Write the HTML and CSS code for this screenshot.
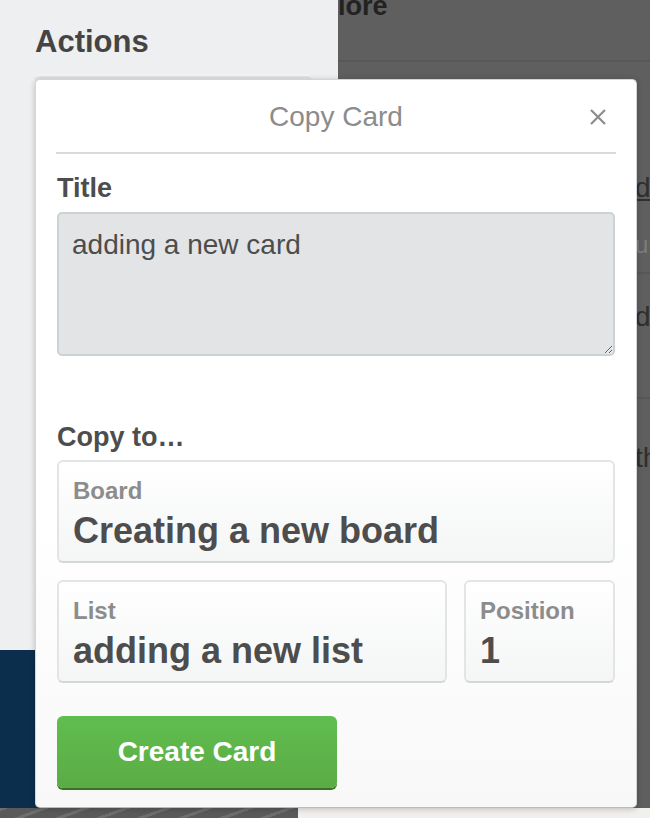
FILE: index.html
```html
<!DOCTYPE html>
<html lang="en">
<head>
<meta charset="utf-8">
<title>Copy Card</title>
<link rel="stylesheet" href="styles.css">
</head>
<body>
<div class="page">
  <div class="stage">
    <aside class="sidebar">
      <div class="actions-panel">
        <h3 class="actions-title">Actions</h3>
        <div class="action-btn"></div>
      </div>
      <div class="navy"></div>
    </aside>
    <main class="board">
      <div class="board-head"><span class="board-head-text">lore</span></div>
      <div class="row row-1">
        <div class="row-line link">dded</div>
        <div class="row-meta">un</div>
      </div>
      <div class="row row-2">
        <div class="row-line">dded</div>
      </div>
      <div class="row row-3">
        <div class="row-line">th</div>
      </div>
    </main>
  </div>
  <div class="ground">
    <div class="texture"></div>
    <div class="floor"></div>
  </div>

  <section class="popover">
    <header class="pop-header">
      <span class="pop-title">Copy Card</span>
      <button class="pop-close" aria-label="Close">
        <svg width="18" height="18" viewBox="0 0 18 18"><path d="M2 2 L16 16 M16 2 L2 16" stroke="#8c8c8c" stroke-width="2.2" fill="none"/></svg>
      </button>
    </header>
    <div class="pop-body">
      <label class="field-label">Title</label>
      <textarea class="title-input">adding a new card</textarea>

      <div class="field-label copy-to">Copy to…</div>
      <div class="select-box">
        <div class="select-label">Board</div>
        <div class="select-value">Creating a new board</div>
      </div>
      <div class="select-row">
        <div class="select-box">
          <div class="select-label">List</div>
          <div class="select-value">adding a new list</div>
        </div>
        <div class="select-box">
          <div class="select-label">Position</div>
          <div class="select-value">1</div>
        </div>
      </div>
      <button class="create-btn">Create Card</button>
    </div>
  </section>
</div>
</body>
</html>
```
FILE: styles.css
```css
* { box-sizing: border-box; }
html, body { margin: 0; padding: 0; }
body {
  width: 650px;
  height: 818px;
  overflow: hidden;
  font-family: "Liberation Sans", Arial, Helvetica, sans-serif;
  color: #4d4d4d;
}
.page { position: relative; width: 650px; height: 818px; }

.stage { display: flex; height: 808px; }
.sidebar { width: 338px; display: flex; flex-direction: column; }
.actions-panel {
  height: 650px;
  background: #edeff0;
  padding: 22px 26px 0 35px;
}
.actions-title {
  margin: 0;
  font-size: 31px;
  line-height: 40px;
  font-weight: bold;
  color: #444;
}
.action-btn {
  margin-top: 12px;
  height: 60px;
  width: 277px;
  border-radius: 5px;
  background: #e2e4e6;
  border-top: 2px solid #f4f5f6;
}
.navy { flex: 1; background: #0c2e4d; }

.board {
  flex: 1;
  background: #5e5f5e;
  overflow: hidden;
  color: #2e2f2e;
  white-space: nowrap;
}
.board-head {
  display: flow-root;
  height: 62px;
  border-bottom: 2px solid #575857;
}
.board-head-text {
  display: block;
  margin-top: -9px;
  font-size: 27px;
  line-height: 30px;
  font-weight: bold;
  color: #222;
}
.row { padding-left: 297px; border-bottom: 2px solid #575857; }
.row-line { font-size: 28px; line-height: 36px; }
.link { text-decoration: underline; }
.row-1 { height: 212px; padding-top: 108px; }
.row-meta { margin-top: 24px; font-size: 24px; line-height: 30px; color: #7c7d7c; }
.row-2 { height: 125px; padding-top: 25px; }
.row-3 { border-bottom: 0; padding-top: 41px; }

.ground { display: flex; height: 10px; }
.texture {
  width: 298px;
  background:
    repeating-linear-gradient(160deg, rgba(255,255,255,.12) 0 3px, transparent 3px 14px),
    #5a5a5a;
}
.floor { flex: 1; background: #f1f0ed; }

/* popover overlay */
.popover {
  position: absolute;
  left: 35px;
  top: 79px;
  width: 602px;
  height: 729px;
  padding: 0 21px;
  background: linear-gradient(#ffffff 0%, #ffffff 60%, #f8f8f8 100%);
  border: 1px solid #d3d6d8;
  border-bottom-color: #b9bdc0;
  border-radius: 5px;
  box-shadow: 0 1px 6px rgba(0,0,0,.22);
}
.pop-header {
  display: grid;
  grid-template-columns: 1fr auto 1fr;
  align-items: center;
  height: 74px;
  padding-top: 2px;
  margin: 0 -1px;
  border-bottom: 2px solid #d6dadc;
}
.pop-title {
  grid-column: 2;
  font-size: 28px;
  line-height: 70px;
  color: #8c8c8c;
}
.pop-close {
  grid-column: 3;
  justify-self: end;
  margin-right: 9px;
  padding: 0;
  border: 0;
  background: none;
  width: 18px;
  height: 18px;
  display: flex;
}

.pop-body { display: flex; flex-direction: column; }
.field-label {
  display: block;
  margin-top: 16px;
  font-size: 27px;
  line-height: 36px;
  font-weight: bold;
  color: #4d4d4d;
}
.title-input {
  display: block;
  margin-top: 6px;
  width: 100%;
  height: 144px;
  padding: 13px 13px;
  font-family: inherit;
  font-size: 28px;
  line-height: 36px;
  color: #4d4d4d;
  background: #e2e4e6;
  border: 2px solid #cdd2d4;
  border-radius: 5px;
  resize: vertical;
  outline: none;
}
.copy-to { margin-top: 63px; }

.select-box {
  margin-top: 5px;
  height: 103px;
  padding: 15px 14px 0 14px;
  border: 2px solid #e2e4e6;
  border-bottom-color: #d3d7d9;
  border-radius: 6px;
  background: linear-gradient(#ffffff, #f4f5f5);
  overflow: hidden;
  white-space: nowrap;
}
.select-label {
  font-size: 24px;
  line-height: 28px;
  font-weight: bold;
  color: #8c8c8c;
}
.select-value {
  margin-top: 6px;
  font-size: 36px;
  line-height: 40px;
  font-weight: bold;
  color: #4d4d4d;
}
.select-row {
  display: grid;
  grid-template-columns: 1fr 151px;
  gap: 17px;
  margin-top: 17px;
}
.select-row .select-box { margin-top: 0; }

.create-btn {
  align-self: flex-start;
  margin-top: 33px;
  width: 280px;
  height: 72px;
  border: 0;
  border-radius: 6px;
  background: linear-gradient(#61bd4f, #5aac44);
  box-shadow: 0 2px 0 #3f6f21;
  color: #fff;
  font-family: inherit;
  font-size: 28px;
  font-weight: bold;
  line-height: 72px;
  padding: 0;
}
```
